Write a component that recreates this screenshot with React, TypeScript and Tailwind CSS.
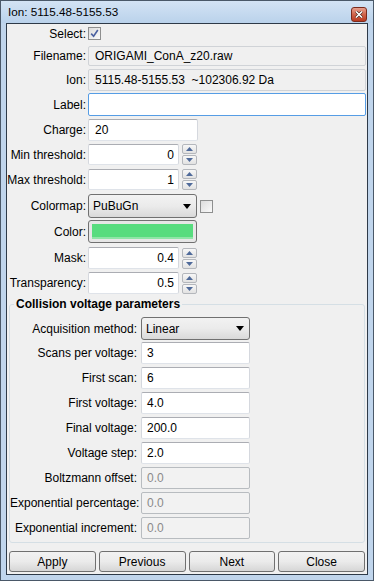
import React from 'react';

const SpinArrow = ({ up }: { up?: boolean }) => (
  <div className="flex h-[10px] w-[15px] items-center justify-center rounded-[2px] border border-[#b4b7bc] bg-gradient-to-b from-[#f7f7f7] to-[#e2e2e2]">
    <svg width="7" height="4" viewBox="0 0 7 4">
      {up ? <polygon points="0,4 7,4 3.5,0" fill="#4f6a9a" /> : <polygon points="0,0 7,0 3.5,4" fill="#4f6a9a" />}
    </svg>
  </div>
);

const Spin = () => (
  <div className="ml-[3px] flex flex-col gap-[1px]">
    <SpinArrow up />
    <SpinArrow />
  </div>
);

const Arrow = () => (
  <svg width="8" height="5" viewBox="0 0 8 5" className="mr-[5px]">
    <polygon points="0,0 8,0 4,5" fill="#000" />
  </svg>
);

const Row = ({ label, w, mt, h, children }: { label: string; w: string; mt: string; h: string; children: React.ReactNode }) => (
  <div className={`flex items-center ${mt} ${h}`}>
    <div className={`${w} shrink-0 whitespace-nowrap text-right`}>{label}</div>
    {children}
  </div>
);

const input = 'flex h-full items-center rounded-[2px] border border-[#abadb3] border-x-[#d5d8de] border-b-[#dfe3e9] bg-white';
const disabled = 'flex h-full items-center rounded-[2px] border border-[#b8bcc0] bg-[#f2f2f2] text-[#8a8a8a]';
const combo = 'flex h-full items-center justify-between rounded-[3px] border border-[#707070] bg-gradient-to-b from-[#f2f2f2] via-[#ebebeb] to-[#d9d9d9]';
const btn = 'flex h-[21px] items-center justify-center rounded-[3px] border border-[#707070] bg-gradient-to-b from-[#f2f2f2] via-[#ebebeb] to-[#d6d6d6]';

export default function App() {
  return (
    <div className="flex h-[581px] w-[374px] flex-col border border-[#4a5868] bg-[#c0d5ec] font-['Liberation_Sans',Arial,sans-serif] text-[12px] text-black">
      {/* Title bar */}
      <div className="flex h-[22px] shrink-0 items-center justify-between bg-gradient-to-b from-[#d3e3f4] to-[#bad2eb] pl-[7px] pr-[6px]">
        <span className="text-[11.7px]">Ion: 5115.48-5155.53</span>
        <div className="mt-[4px] flex h-[15px] w-[16px] items-center justify-center rounded-[3px] border border-[#7a2a1c] bg-gradient-to-b from-[#e6a08f] via-[#d0634a] to-[#b8391f]">
          <svg width="8" height="7" viewBox="0 0 8 7">
            <path d="M1 0.5 L7 6.5 M7 0.5 L1 6.5" stroke="#3a1a12" strokeWidth="2.6" />
            <path d="M1 0.5 L7 6.5 M7 0.5 L1 6.5" stroke="#fff" strokeWidth="1.6" />
          </svg>
        </div>
      </div>

      {/* Client area */}
      <div className="mx-[5px] mb-[5px] flex flex-1 flex-col border border-[#2e3a48] bg-[#f0f0f0] pr-[1px]">
        <Row label="Select:" w="w-[79px]" mt="mt-[3px]" h="h-[13px]">
          <div className="ml-[2px] flex h-[13px] w-[13px] items-center justify-center border border-[#8e8f8f] bg-gradient-to-br from-[#dcdcdc] to-[#fafafa]">
            <svg width="9" height="9" viewBox="0 0 9 9">
              <path d="M1.2 4.6 L3.6 7.2 L7.8 1" stroke="#4a60a0" strokeWidth="1.6" fill="none" />
            </svg>
          </div>
        </Row>
        <Row label="Filename:" w="w-[79px]" mt="mt-[6px]" h="h-[20px]">
          <div className="ml-[2px] flex h-full flex-1 items-center rounded-[2px] border border-[#d0d3d7] bg-[#f0f0f0] pl-[6px]">ORIGAMI_ConA_z20.raw</div>
        </Row>
        <Row label="Ion:" w="w-[79px]" mt="mt-[3px]" h="h-[22px]">
          <div className="ml-[2px] flex h-full flex-1 items-center whitespace-pre rounded-[2px] border border-[#d0d3d7] bg-[#f0f0f0] pl-[6px]">5115.48-5155.53  ~102306.92 Da</div>
        </Row>
        <Row label="Label:" w="w-[79px]" mt="mt-[2px]" h="h-[23px]">
          <div className="ml-[2px] h-full flex-1 rounded-[2px] border border-[#569de5] bg-white" />
        </Row>
        <Row label="Charge:" w="w-[79px]" mt="mt-[3px]" h="h-[22px]">
          <div className={`${input} ml-[2px] w-[110px] pl-[6px]`}>20</div>
        </Row>
        <Row label="Min threshold:" w="w-[79px]" mt="mt-[3px]" h="h-[21px]">
          <div className={`${input} ml-[2px] w-[91px] justify-end pr-[4px]`}>0</div>
          <Spin />
        </Row>
        <Row label="Max threshold:" w="w-[79px]" mt="mt-[4px]" h="h-[21px]">
          <div className={`${input} ml-[2px] w-[91px] justify-end pr-[4px]`}>1</div>
          <Spin />
        </Row>
        <Row label="Colormap:" w="w-[79px]" mt="mt-[4px]" h="h-[24px]">
          <div className={`${combo} ml-[2px] w-[109px] pl-[4px]`}>
            <span>PuBuGn</span>
            <Arrow />
          </div>
          <div className="ml-[3px] h-[13px] w-[13px] border border-[#8e8f8f] bg-gradient-to-br from-[#dcdcdc] to-[#fafafa]" />
        </Row>
        <Row label="Color:" w="w-[79px]" mt="mt-[2px]" h="h-[23px]">
          <div className="ml-[2px] flex h-full w-[109px] flex-col rounded-[3px] border border-[#707070] bg-[#e6e6e6] p-[3px]">
            <div className="flex-1 border-b-2 border-[#8fe5a7] bg-[#57dc7e]" />
          </div>
        </Row>
        <Row label="Mask:" w="w-[79px]" mt="mt-[4px]" h="h-[22px]">
          <div className={`${input} ml-[2px] w-[91px] justify-end pr-[4px]`}>0.4</div>
          <Spin />
        </Row>
        <Row label="Transparency:" w="w-[79px]" mt="mt-[3px]" h="h-[22px]">
          <div className={`${input} ml-[2px] w-[91px] justify-end pr-[4px]`}>0.5</div>
          <Spin />
        </Row>

        {/* Collision voltage group */}
        <fieldset className="ml-[2px] mr-[1px] mt-[2px] rounded-[3px] border border-[#d5dfe5] pb-[3px]">
          <legend className="ml-[4px] px-[2px] text-[12px] font-bold leading-[16px]">Collision voltage parameters</legend>
          <Row label="Acquisition method:" w="w-[127px]" mt="mt-[5px]" h="h-[23px]">
            <div className={`${combo} ml-[4px] w-[109px] pl-[4px]`}>
              <span>Linear</span>
              <Arrow />
            </div>
          </Row>
          <Row label="Scans per voltage:" w="w-[127px]" mt="mt-[2px]" h="h-[22px]">
            <div className={`${input} ml-[4px] w-[109px] pl-[5px]`}>3</div>
          </Row>
          <Row label="First scan:" w="w-[127px]" mt="mt-[3px]" h="h-[22px]">
            <div className={`${input} ml-[4px] w-[109px] pl-[5px]`}>6</div>
          </Row>
          <Row label="First voltage:" w="w-[127px]" mt="mt-[3px]" h="h-[22px]">
            <div className={`${input} ml-[4px] w-[109px] pl-[5px]`}>4.0</div>
          </Row>
          <Row label="Final voltage:" w="w-[127px]" mt="mt-[3px]" h="h-[22px]">
            <div className={`${input} ml-[4px] w-[109px] pl-[5px]`}>200.0</div>
          </Row>
          <Row label="Voltage step:" w="w-[127px]" mt="mt-[3px]" h="h-[22px]">
            <div className={`${input} ml-[4px] w-[109px] pl-[5px]`}>2.0</div>
          </Row>
          <Row label="Boltzmann offset:" w="w-[127px]" mt="mt-[3px]" h="h-[22px]">
            <div className={`${disabled} ml-[4px] w-[109px] pl-[5px]`}>0.0</div>
          </Row>
          <Row label="Exponential percentage:" w="w-[127px]" mt="mt-[3px]" h="h-[22px]">
            <div className={`${disabled} ml-[4px] w-[109px] pl-[5px]`}>0.0</div>
          </Row>
          <Row label="Exponential increment:" w="w-[127px]" mt="mt-[3px]" h="h-[22px]">
            <div className={`${disabled} ml-[4px] w-[109px] pl-[5px]`}>0.0</div>
          </Row>
        </fieldset>

        {/* Buttons */}
        <div className="mt-auto mb-[2px] ml-[2px] mr-[1px] grid grid-cols-4 gap-[3px]">
          <button className={btn}>Apply</button>
          <button className={btn}>Previous</button>
          <button className={btn}>Next</button>
          <button className={btn}>Close</button>
        </div>
      </div>
    </div>
  );
}
